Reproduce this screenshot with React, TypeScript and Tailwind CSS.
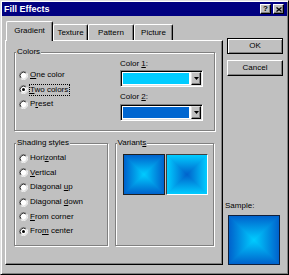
import { useId, type ReactNode } from "react";

const EDGE = "#0062cc";
const CENTER = "#00ccff";

function Radio({ checked }: { checked?: boolean }) {
  return (
    <svg width="9" height="9" viewBox="0 0 12 12" className="shrink-0">
      <circle cx="6" cy="6" r="4.5" fill="#fff" />
      <path d="M2.11 9.89A5.5 5.5 0 0 1 9.89 2.11" fill="none" stroke="#808080" />
      <path d="M9.89 2.11A5.5 5.5 0 0 1 2.11 9.89" fill="none" stroke="#fff" />
      <path d="M2.82 9.18A4.5 4.5 0 0 1 9.18 2.82" fill="none" stroke="#000" />
      <path d="M9.18 2.82A4.5 4.5 0 0 1 2.82 9.18" fill="none" stroke="#dfdfdf" />
      {checked && <circle cx="6" cy="6" r="2" fill="#000" />}
    </svg>
  );
}

function RadioRow({
  label,
  checked,
  focused,
  rowClass,
}: {
  label: ReactNode;
  checked?: boolean;
  focused?: boolean;
  rowClass: string;
}) {
  return (
    <div className={`flex items-center ${rowClass}`}>
      <Radio checked={checked} />
      <span
        className={`ml-[1px] border pr-[1px] leading-[10px] whitespace-nowrap ${
          focused ? "border-dotted border-black" : "border-transparent"
        }`}
      >
        {label}
      </span>
    </div>
  );
}

// etched group box, label sits on the top line
function Group({
  title,
  className,
  children,
}: {
  title: ReactNode;
  className: string;
  children?: ReactNode;
}) {
  return (
    <div
      className={`relative border border-[#808080] shadow-[inset_1px_1px_0_#fff,1px_1px_0_#fff] ${className}`}
    >
      <span className="absolute -top-[6px] left-[1px] bg-[#c0c0c0] px-[1px] leading-[10px] whitespace-nowrap">
        {title}
      </span>
      {children}
    </div>
  );
}

function Combo({ color }: { color: string }) {
  return (
    <div className="flex h-[17px] w-[83px] border border-t-[#808080] border-l-[#808080] border-r-white border-b-white bg-white p-[1px] shadow-[inset_1px_1px_0_#000,inset_-1px_-1px_0_#dfdfdf]">
      <div className="my-[1px] ml-[1px] mr-[2px] flex-1" style={{ background: color }} />
      <div className="flex w-[10px] items-center justify-center border border-t-[#dfdfdf] border-l-[#dfdfdf] border-r-black border-b-black bg-[#c0c0c0] shadow-[inset_-1px_-1px_0_#808080]">
        <svg width="5" height="3" viewBox="0 0 5 3">
          <polygon points="0,0 5,0 2.5,3" fill="#000" />
        </svg>
      </div>
    </div>
  );
}

function RectGradient({ edge, center }: { edge: string; center: string }) {
  const id = useId().replace(/[^a-zA-Z0-9]/g, "");
  return (
    <svg viewBox="0 0 100 100" preserveAspectRatio="none" className="block h-full w-full">
      <defs>
        <linearGradient id={`${id}v`} x1="0" y1="0" x2="0" y2="100" gradientUnits="userSpaceOnUse">
          <stop offset="0" stopColor={edge} />
          <stop offset="0.5" stopColor={center} />
          <stop offset="1" stopColor={edge} />
        </linearGradient>
        <linearGradient id={`${id}h`} x1="0" y1="0" x2="100" y2="0" gradientUnits="userSpaceOnUse">
          <stop offset="0" stopColor={edge} />
          <stop offset="0.5" stopColor={center} />
          <stop offset="1" stopColor={edge} />
        </linearGradient>
      </defs>
      <rect x="0" y="0" width="100" height="100" fill={`url(#${id}v)`} />
      <polygon points="0,0 0,100 50,50" fill={`url(#${id}h)`} />
      <polygon points="100,0 100,100 50,50" fill={`url(#${id}h)`} />
    </svg>
  );
}

function Tab({ label, active, w }: { label: string; active?: boolean; w: string }) {
  return (
    <div
      className={`flex items-center justify-center rounded-t-[2px] border-t border-l border-r border-t-white border-l-white border-r-black bg-[#c0c0c0] shadow-[inset_-1px_0_0_#808080] ${w} ${
        active ? "relative z-10 -mb-[1px] h-[20px] pb-[1px]" : "h-[16px]"
      }`}
    >
      {label}
    </div>
  );
}

function Button({ children, isDefault }: { children: ReactNode; isDefault?: boolean }) {
  return (
    <div
      className={`flex h-[16px] w-[56px] items-center justify-center ${
        isDefault
          ? "border border-black shadow-[inset_1px_1px_0_#fff,inset_-1px_-1px_0_#808080]"
          : "border border-t-white border-l-white border-r-black border-b-black shadow-[inset_-1px_-1px_0_#808080]"
      }`}
    >
      {children}
    </div>
  );
}

const SHADING: { label: ReactNode; checked?: boolean }[] = [
  { label: <>Hori<u>z</u>ontal</> },
  { label: <><u>V</u>ertical</> },
  { label: <>Diagonal <u>u</u>p</> },
  { label: <>Diagonal <u>d</u>own</> },
  { label: <><u>F</u>rom corner</> },
  { label: <>Fro<u>m</u> center</>, checked: true },
];

export default function App() {
  return (
    <div className="flex h-[275px] w-[289px] flex-col border border-t-[#dfdfdf] border-l-[#dfdfdf] border-r-black border-b-black bg-[#c0c0c0] p-[1px] font-['Liberation_Sans',Arial,sans-serif] text-[8px] text-black shadow-[inset_1px_1px_0_#fff,inset_-1px_-1px_0_#808080]">
      {/* Title bar */}
      <div className="flex h-[14px] items-center bg-[#000080] pl-[2px] pr-[3px]">
        <span className="text-[9px] leading-[10px] font-bold text-white">Fill Effects</span>
        <div className="ml-auto flex gap-[2px]">
          <div className="flex h-[10px] w-[11px] items-center justify-center border border-t-white border-l-white border-r-black border-b-black bg-[#c0c0c0] text-[8px] leading-none font-bold shadow-[inset_-1px_-1px_0_#808080]">
            ?
          </div>
          <div className="flex h-[10px] w-[11px] items-center justify-center border border-t-white border-l-white border-r-black border-b-black bg-[#c0c0c0] shadow-[inset_-1px_-1px_0_#808080]">
            <svg width="6" height="5" viewBox="0 0 6 5">
              <path d="M0.5 0.5L5.5 4.5M5.5 0.5L0.5 4.5" stroke="#000" strokeWidth="1.3" />
            </svg>
          </div>
        </div>
      </div>

      <div className="flex items-start gap-[4px] pt-[5px] pl-[3px]">
        {/* Tabs + panel */}
        <div className="flex w-[218px] flex-col">
          <div className="flex h-[19px] items-end pl-[1px]">
            <Tab label="Gradient" active w="w-[47px]" />
            <Tab label="Texture" w="w-[35px]" />
            <Tab label="Pattern" w="w-[46px]" />
            <Tab label="Picture" w="w-[39px]" />
          </div>
          <div className="flex h-[225px] flex-col border border-t-white border-l-white border-r-black border-b-black px-[8px] pt-[11px] shadow-[inset_-1px_-1px_0_#808080]">
            <Group title="Colors" className="flex h-[79px] w-[201px]">
              <div className="flex w-[105px] flex-col pt-[15px] pl-[4px]">
                <RadioRow rowClass="h-[14.5px]" label={<><u>O</u>ne color</>} />
                <RadioRow rowClass="h-[14.5px]" label={<><u>T</u>wo colors</>} checked focused />
                <RadioRow rowClass="h-[14.5px]" label={<>P<u>r</u>eset</>} />
              </div>
              <div className="flex flex-col pt-[6px]">
                <span className="leading-[10px]">
                  Color <u>1</u>:
                </span>
                <div className="mt-[1px]">
                  <Combo color="#00ccff" />
                </div>
                <span className="mt-[5px] leading-[10px]">
                  Color <u>2</u>:
                </span>
                <div className="mt-[2px]">
                  <Combo color="#0066d0" />
                </div>
              </div>
            </Group>

            <div className="mt-[12px] flex gap-[7px]">
              <Group title="Shading styles" className="flex h-[103px] w-[94px] flex-col pt-[7px] pl-[4px]">
                {SHADING.map((s, i) => (
                  <RadioRow key={i} rowClass="h-[14.6px]" label={s.label} checked={s.checked} />
                ))}
              </Group>
              <Group
                title={
                  <>
                    Variant<u>s</u>
                  </>
                }
                className="flex h-[103px] w-[100px] items-start gap-[1px] pt-[10px] pl-[7px]"
              >
                <div className="h-[41px] w-[42px] border border-[#202020]">
                  <RectGradient edge={EDGE} center={CENTER} />
                </div>
                <div className="h-[41px] w-[42px] border border-t-[#404040] border-l-[#404040] border-r-white border-b-white">
                  <RectGradient edge={CENTER} center={EDGE} />
                </div>
              </Group>
            </div>
          </div>
        </div>

        {/* Right column */}
        <div className="flex h-[244px] w-[56px] flex-col pt-[17px]">
          <Button isDefault>OK</Button>
          <div className="mt-[6px]">
            <Button>Cancel</Button>
          </div>
          <span className="mt-auto -ml-[2px] leading-[10px]">Sample:</span>
          <div className="mt-[4px] ml-[1px] h-[50px] w-[52px] border border-[#10203c]">
            <RectGradient edge={EDGE} center={CENTER} />
          </div>
        </div>
      </div>
    </div>
  );
}
